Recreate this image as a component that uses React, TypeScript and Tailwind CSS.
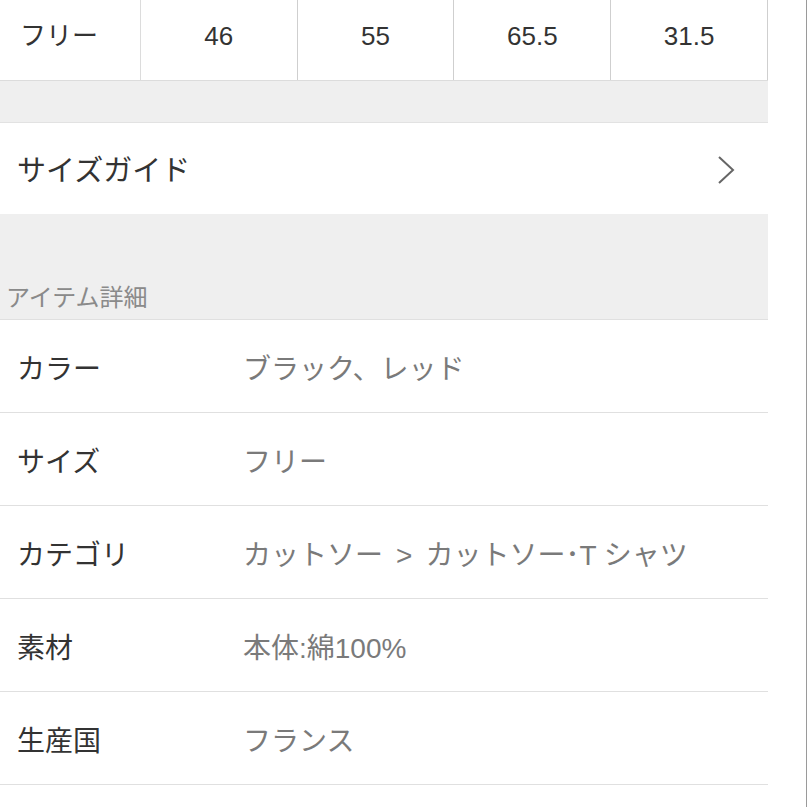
const sizes = ["46", "55", "65.5", "31.5"];

const details = [
  { label: "カラー", value: <>ブラック、レッド</> },
  { label: "サイズ", value: <>フリー</> },
  {
    label: "カテゴリ",
    value: (
      <>
        カットソー<span className="mx-[13px]">&gt;</span>カットソー･T シャツ
      </>
    ),
  },
  { label: "素材", value: <>本体:綿100%</> },
  { label: "生産国", value: <>フランス</> },
];

export default function App() {
  return (
    <div
      className="w-[807px] h-[807px] overflow-hidden bg-white flex border-r border-[#9a9a9a]"
      style={{ fontFamily: '"Liberation Sans", "Noto Sans CJK JP", sans-serif' }}
    >
      <div className="w-[768px] flex flex-col shrink-0">
        {/* size table last row */}
        <div className="flex shrink-0 h-[81px] border-b border-[#dcdcdc] text-[26px] text-[#333]">
          <div className="w-[141px] flex items-center justify-center pr-[22px] pb-[8px] border-r border-[#dcdcdc]">
            フリー
          </div>
          {sizes.map((s, i) => (
            <div
              key={i}
              className="w-[157px] flex items-center justify-center pb-[8px] border-r border-[#cfcfcf]"
            >
              {s}
            </div>
          ))}
        </div>

        <div className="h-[42px] shrink-0 bg-[#efefef] border-b border-[#e2e2e2]" />

        {/* size guide */}
        <div className="h-[91px] shrink-0 flex items-center justify-between pl-[17px] pr-[33px] pt-[6px] text-[29px] text-[#333]">
          <span>サイズガイド</span>
          <svg width="18" height="30" viewBox="0 0 18 30" fill="none" className="-mt-[4px]">
            <polyline points="2,2 16,15 2,28" stroke="#666" strokeWidth="2" />
          </svg>
        </div>

        <div className="h-[106px] shrink-0 bg-[#efefef] border-b border-[#e0e0e0] flex items-end pl-[6px] pb-[3px]">
          <span className="text-[24px] text-[#8a8a8a]">アイテム詳細</span>
        </div>

        {details.map((d) => (
          <div
            key={d.label}
            className="h-[93px] shrink-0 flex items-center pt-[7px] border-b border-[#e0e0e0]"
          >
            <span className="w-[243px] pl-[17px] text-[28px] text-[#333]">{d.label}</span>
            <span className="text-[28px] text-[#7a7a7a]">{d.value}</span>
          </div>
        ))}
        <div className="h-[40px] shrink-0" />
      </div>
    </div>
  );
}
